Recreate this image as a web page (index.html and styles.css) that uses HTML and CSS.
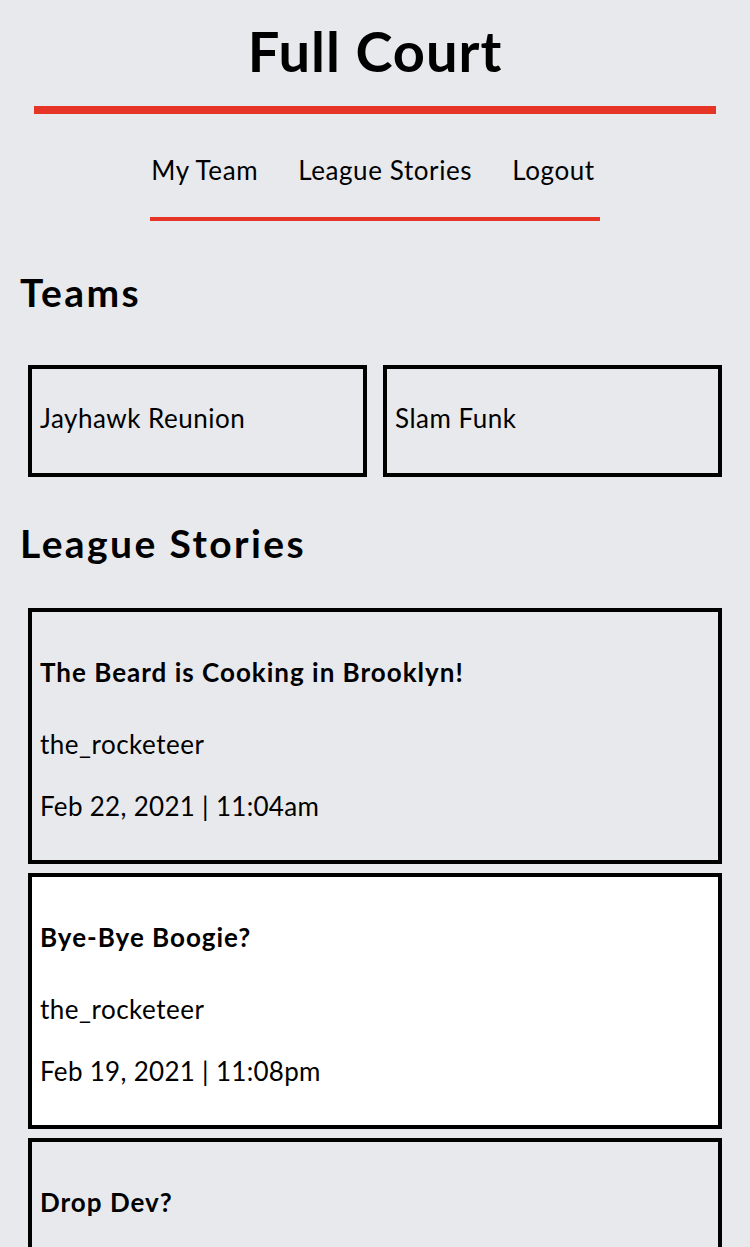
FILE: index.html
```html
<!DOCTYPE html>
<html lang="en">
<head>
<meta charset="utf-8">
<title>Full Court</title>
<link rel="stylesheet" href="styles.css">
</head>
<body>
<header class="site-header">
  <h1 class="brand">Full Court</h1>
  <div class="brand-rule"></div>
  <nav class="nav">
    <ul class="nav-list">
      <li><a class="nav-link" href="#">My Team</a></li>
      <li><a class="nav-link" href="#">League Stories</a></li>
      <li><a class="nav-link" href="#">Logout</a></li>
    </ul>
  </nav>
</header>
<main class="content">
  <h2 class="section-title teams-title">Teams</h2>
  <div class="team-grid">
    <div class="team-card">Jayhawk Reunion</div>
    <div class="team-card">Slam Funk</div>
  </div>
  <h2 class="section-title stories-title">League Stories</h2>
  <div class="story-list">
    <article class="story-card">
      <h3 class="story-title">The Beard is Cooking in Brooklyn!</h3>
      <p class="story-author">the_rocketeer</p>
      <p class="story-date">Feb 22, 2021 | 11:04am</p>
    </article>
    <article class="story-card story-card-active">
      <h3 class="story-title">Bye-Bye Boogie?</h3>
      <p class="story-author">the_rocketeer</p>
      <p class="story-date">Feb 19, 2021 | 11:08pm</p>
    </article>
    <article class="story-card">
      <h3 class="story-title">Drop Dev?</h3>
      <p class="story-author">the_rocketeer</p>
      <p class="story-date">Feb 17, 2021 | 9:42pm</p>
    </article>
  </div>
</main>
</body>
</html>
```
FILE: styles.css
```css
* { box-sizing: border-box; }

html, body {
  margin: 0;
  padding: 0;
  background: #e8e9ed;
  color: #000;
  font-family: "Lato", "Noto Sans", sans-serif;
}

.site-header {
  text-align: center;
}

.brand {
  margin: 19px 0 0;
  font-size: 56px;
  line-height: 64px;
  font-weight: 700;
  letter-spacing: 1px;
}

.brand-rule {
  height: 8px;
  margin: 23px 34px 0;
  background: #e63526;
}

.nav {
  display: flex;
  justify-content: center;
  margin-top: 38px;
}

.nav-list {
  list-style: none;
  margin: 0;
  padding: 0 5px 29px 1px;
  display: flex;
  gap: 40px;
  border-bottom: 4px solid #e63526;
}

.nav-link {
  display: block;
  font-size: 26px;
  line-height: 36px;
  letter-spacing: 0.6px;
  color: #000;
  text-decoration: none;
}

.content {
  padding: 0 20px;
}

.section-title {
  margin: 0;
  font-size: 39px;
  line-height: 46px;
  font-weight: 700;
  letter-spacing: 2.4px;
}

.teams-title {
  margin-top: 48px;
}

.team-grid {
  display: grid;
  grid-template-columns: 1fr 1fr;
  gap: 16px;
  margin: 50px 8px 0;
}

.team-card {
  border: 4px solid #000;
  padding: 31px 8px 37px;
  font-size: 26px;
  line-height: 36px;
  letter-spacing: 0.5px;
}

.stories-title {
  margin-top: 43px;
}

.story-list {
  display: flex;
  flex-direction: column;
  gap: 9px;
  margin: 42px 8px 0;
}

.story-card {
  border: 4px solid #000;
  padding: 0 8px;
  font-size: 26px;
  line-height: 36px;
  letter-spacing: 0.3px;
}

.story-card-active {
  background: #fff;
}

.story-title {
  margin: 42px 0 36px;
  font-size: 26px;
  line-height: 36px;
  font-weight: 700;
  letter-spacing: 1px;
}

.story-author {
  margin: 0 0 26px;
  letter-spacing: 0.5px;
}

.story-date {
  margin: 0 0 36px;
}
```
